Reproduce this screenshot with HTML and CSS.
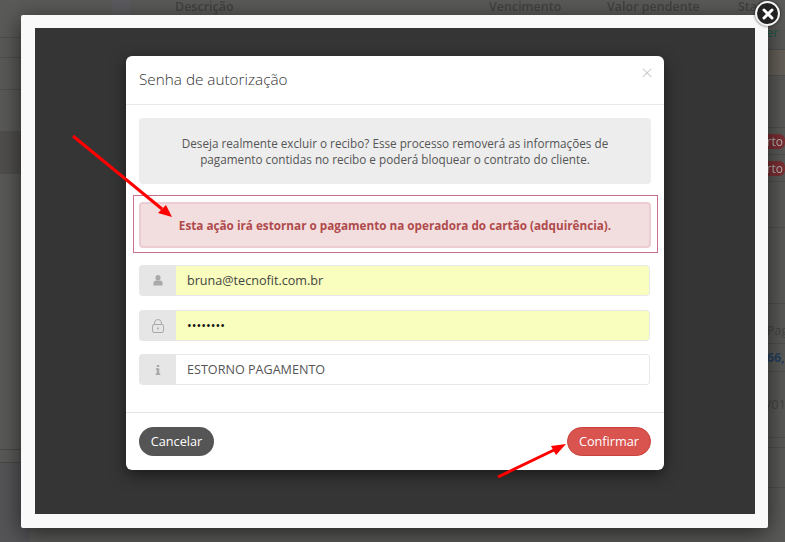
FILE: index.html
```html
<!DOCTYPE html>
<html lang="en">
<head>
    <link rel="stylesheet" href="styles.css">
</head>
<body>
    <div class="page-bg">
        <div class="bg-head">
            <span class="bg-block"></span>
            <span class="bg-col col-desc">Descrição</span>
            <span class="bg-col col-venc">Vencimento</span>
            <span class="bg-col col-valor">Valor pendente</span>
            <span class="bg-col col-status">Status</span>
        </div>
        <div class="bg-sides">
            <div class="bg-left">
                <div class="l-row l1"></div>
                <div class="l-row l2"></div>
                <div class="l-row l3"></div>
                <div class="l-row l4"></div>
                <div class="l-row l5"></div>
                <div class="l-row l6"></div>
                <div class="l-row l7"></div>
                <div class="l-row l8"></div>
            </div>
            <div class="bg-right">
                <div class="r-row r1"><span class="green-text">er</span></div>
                <div class="r-row r2"></div>
                <div class="r-row r3"><span>us</span></div>
                <div class="r-row r4"><span class="green-dot"></span></div>
                <div class="r-row r5"><span class="red-badge">Aberto</span></div>
                <div class="r-row r6"><span class="red-badge">Aberto</span></div>
                <div class="r-row r7"></div>
                <div class="r-row r8"></div>
                <div class="r-row r8b"></div>
                <div class="r-row r9"><span class="clip-left">Pag</span></div>
                <div class="r-row r10"><span class="clip-left blue-text">66,6</span></div>
                <div class="r-row r11"><span class="clip-left">/01</span></div>
                <div class="r-row r12"></div>
                <div class="r-row r13"></div>
                <div class="r-row r14"></div>
            </div>
        </div>
    </div>

    <div class="frame">
        <div class="frame-inner">
            <div class="modal">
                <div class="modal-header">
                    <h4>Senha de autorização</h4>
                    <span class="modal-close">×</span>
                </div>
                <div class="modal-body">
                    <div class="well">
                        Deseja realmente excluir o recibo? Esse processo removerá as informações de<br>
                        pagamento contidas no recibo e poderá bloquear o contrato do cliente.
                    </div>
                    <div class="outline-box">
                        <div class="alert">Esta ação irá estornar o pagamento na operadora do cartão (adquirência).</div>
                    </div>
                    <div class="input-group">
                        <span class="addon">
                            <svg width="10" height="11" viewBox="0 0 11 12"><ellipse cx="5.5" cy="3" rx="2.8" ry="3" fill="#a9a9a9"/><path d="M0.5 11.5V8.6C0.5 7 1.8 6 3.2 6h4.6c1.4 0 2.7 1 2.7 2.6v2.9z" fill="#a9a9a9"/></svg>
                        </span>
                        <input class="autofill" type="text" value="bruna@tecnofit.com.br">
                    </div>
                    <div class="input-group">
                        <span class="addon">
                            <svg width="12" height="14" viewBox="0 0 12 14" fill="none" stroke="#a9a9a9" stroke-width="1"><rect x="0.5" y="5.5" width="11" height="8" rx="1.5"/><path d="M2.5 5.5V4a3.5 3.5 0 0 1 7 0v1.5"/><path d="M6 8.5v2" stroke-width="1.6"/></svg>
                        </span>
                        <input class="autofill pass" type="password" value="12345678">
                    </div>
                    <div class="input-group">
                        <span class="addon">
                            <svg width="6" height="10" viewBox="0 0 6 12"><path d="M1.5 0h3v2.4h-3zM0.5 4h4v6h1.2v2H0.3v-2h1.2V6H0.5z" fill="#a9a9a9"/></svg>
                        </span>
                        <input type="text" value="ESTORNO PAGAMENTO">
                    </div>
                </div>
                <div class="modal-footer">
                    <button class="btn btn-dark">Cancelar</button>
                    <button class="btn btn-red">Confirmar</button>
                </div>
            </div>
        </div>
    </div>

    <div class="frame-close">
        <svg width="12" height="12" viewBox="0 0 12 12"><path d="M2 2l8 8M10 2l-8 8" stroke="#fff" stroke-width="3" stroke-linecap="round"/></svg>
    </div>

    <svg class="arrows" width="785" height="542" viewBox="0 0 785 542">
        <path d="M73 136L162 209" stroke="#f00" stroke-width="3" fill="none"/>
        <path d="M172 217L158 213L166 205z" fill="#f00"/>
        <path d="M498 477L554 450" stroke="#f00" stroke-width="3" fill="none"/>
        <path d="M566 444L556 455L551 446z" fill="#f00"/>
    </svg>
</body>
</html>
```

FILE: styles.css
```css
* {
    box-sizing: border-box;
}

html, body {
    height: 100%;
}

body {
    margin: 0;
    overflow: hidden;
    font-family: 'Open Sans', sans-serif;
    background-color: #5a5a58;
    color: #555;
}

/* page behind the overlay */
.page-bg {
    height: 542px;
    display: flex;
    flex-direction: column;
    filter: blur(0.4px);
}

.bg-head {
    height: 15px;
    display: flex;
    font-size: 12.5px;
    font-weight: 600;
    line-height: 14px;
    color: #424242;
    flex-shrink: 0;
}

.bg-block {
    width: 19px;
    height: 15px;
    margin-left: 111px;
    background-color: #5c5c60;
}

.bg-col {
    white-space: nowrap;
}

.col-desc {
    margin-left: 45px;
    width: 314px;
}

.col-venc {
    width: 118px;
}

.col-valor {
    width: 131px;
}

.bg-sides {
    flex: 1;
    display: flex;
    justify-content: space-between;
}

.bg-left {
    width: 30px;
    display: flex;
    flex-direction: column;
}

.l-row {
    border-bottom: 1px solid #4e4e4c;
}

.l1 { height: 23px; }
.l2 { height: 20px; }
.l3 { height: 32px; }
.l4 { height: 42px; }
.l5 { height: 42px; background-color: #504f4d; }
.l6 { height: 276px; border-bottom-color: #484846; }
.l7 { height: 13px; border-bottom-color: #484846; }
.l8 { flex: 1; background-color: #555558; border-bottom: none; }

.bg-right {
    width: 30px;
    display: flex;
    flex-direction: column;
    font-size: 12px;
    color: #444;
    overflow: hidden;
}

.r-row {
    display: flex;
    align-items: center;
    justify-content: flex-end;
    border-bottom: 1px solid #505050;
    white-space: nowrap;
}

.r1 { height: 35px; padding-right: 6px; font-size: 13px; }
.r2 { height: 26px; background-color: #66625a; }
.r3 { height: 26px; padding-right: 22px; font-size: 12px; border-bottom: none; }
.r4 { height: 26px; padding-right: 17px; }
.r5 { height: 27px; }
.r6 { height: 27px; }
.r7 { height: 46px; }
.r8 { height: 76px; }
.r8b { height: 14px; border-bottom: none; }
.r9 { height: 26px; justify-content: flex-start; }
.r10 { height: 28px; justify-content: flex-start; }
.r11 { height: 66px; justify-content: flex-start; }
.r12 { height: 10px; }
.r13 { height: 40px; }
.r14 { flex: 1; border-bottom: none; }

.green-text {
    color: #1f5a48;
}

.green-dot {
    width: 20px;
    height: 16px;
    border-radius: 50%;
    background-color: #1f6f5f;
}

.red-badge {
    background-color: #7d2f33;
    color: #bbb;
    border-radius: 6px;
    padding: 0 2px 0 8px;
    height: 15px;
    line-height: 15px;
}

.clip-left {
    margin-left: 12px;
    font-size: 12.5px;
}

.blue-text {
    color: #22405f;
    font-weight: 700;
}

/* lightbox frame */
.frame {
    position: absolute;
    left: 21px;
    top: 15px;
    width: 747px;
    height: 513px;
    padding: 13px 13px 14px 14px;
    background-color: #f9f9f9;
    border-radius: 2px;
    box-shadow: 0 5px 25px rgba(0, 0, 0, 0.6);
}

.frame-inner {
    height: 100%;
    background-color: #353535;
    padding-top: 28px;
}

.frame-close {
    position: absolute;
    left: 755px;
    top: 1px;
    width: 25px;
    height: 25px;
    border-radius: 50%;
    background-color: #222;
    border: 2px solid #f4f4f4;
    box-shadow: 0 0 3px rgba(0, 0, 0, 0.7);
    display: flex;
    align-items: center;
    justify-content: center;
}

.modal {
    width: 538px;
    height: 414px;
    margin-left: 91px;
    background-color: #fff;
    border-radius: 6px;
    box-shadow: 0 5px 15px rgba(0, 0, 0, 0.5);
}

.modal-header {
    height: 49px;
    padding: 13px 13px 0;
    border-bottom: 1px solid #e9e9e9;
    display: flex;
    justify-content: space-between;
}

.modal-header h4 {
    margin: 0;
    font-size: 15.3px;
    font-weight: 300;
    line-height: 20px;
    color: #333;
}

.modal-close {
    font-size: 21px;
    line-height: 6px;
    height: 6px;
    margin: 0 -2px 0 0;
    color: #c8c8c8;
    font-weight: 300;
}

.modal-body {
    height: 307px;
    padding: 13px 13px 0;
}

.well {
    height: 66px;
    padding-top: 17px;
    background-color: #ededed;
    border-radius: 4px;
    text-align: center;
    font-size: 11.72px;
    line-height: 16px;
    color: #555;
}

.outline-box {
    margin: 11px -7px 12px -6px;
    height: 58px;
    padding: 6px 6px 4px 5px;
    border: 1px solid #c8708c;
}

.alert {
    height: 46px;
    background-color: #f2dede;
    border: 2px solid #eccdd4;
    border-radius: 4px;
    text-align: center;
    line-height: 42px;
    font-size: 11.72px;
    font-weight: 700;
    color: #b04a4c;
}

.input-group {
    display: flex;
    height: 31px;
    margin-right: 1px;
    margin-bottom: 14px;
}

.input-group:nth-child(4) {
    margin-bottom: 13px;
}

.addon {
    width: 37px;
    display: flex;
    align-items: center;
    justify-content: center;
    background-color: #e6e6e6;
    border-radius: 4px 0 0 4px;
}

.input-group input {
    flex: 1;
    min-width: 0;
    height: 100%;
    padding: 0 11px;
    border: 1px solid #e8e8e8;
    border-left: none;
    border-radius: 0 4px 4px 0;
    background-color: #fff;
    font-family: 'Open Sans', sans-serif;
    font-size: 12.6px;
    color: #555;
    outline: none;
}

.input-group input.autofill {
    background-color: #f9fdbd;
    color: #444;
}

.input-group input.pass {
    color: #111;
}

.modal-footer {
    height: 58px;
    padding: 14px 13px 0;
    border-top: 1px solid #e5e5e5;
    display: flex;
    justify-content: space-between;
}

.btn {
    height: 29px;
    padding: 0 10px 2px;
    border-radius: 15px;
    border: 1px solid transparent;
    font-family: 'Open Sans', sans-serif;
    font-size: 12.7px;
    color: #fff;
    cursor: pointer;
}

.btn-dark {
    width: 75px;
    background-color: #555;
}

.btn-red {
    width: 84px;
    background-color: #d9534f;
    border-color: #c9403c;
}

/* annotations drawn over the screenshot */
.arrows {
    position: absolute;
    left: 0;
    top: 0;
    pointer-events: none;
}
```
